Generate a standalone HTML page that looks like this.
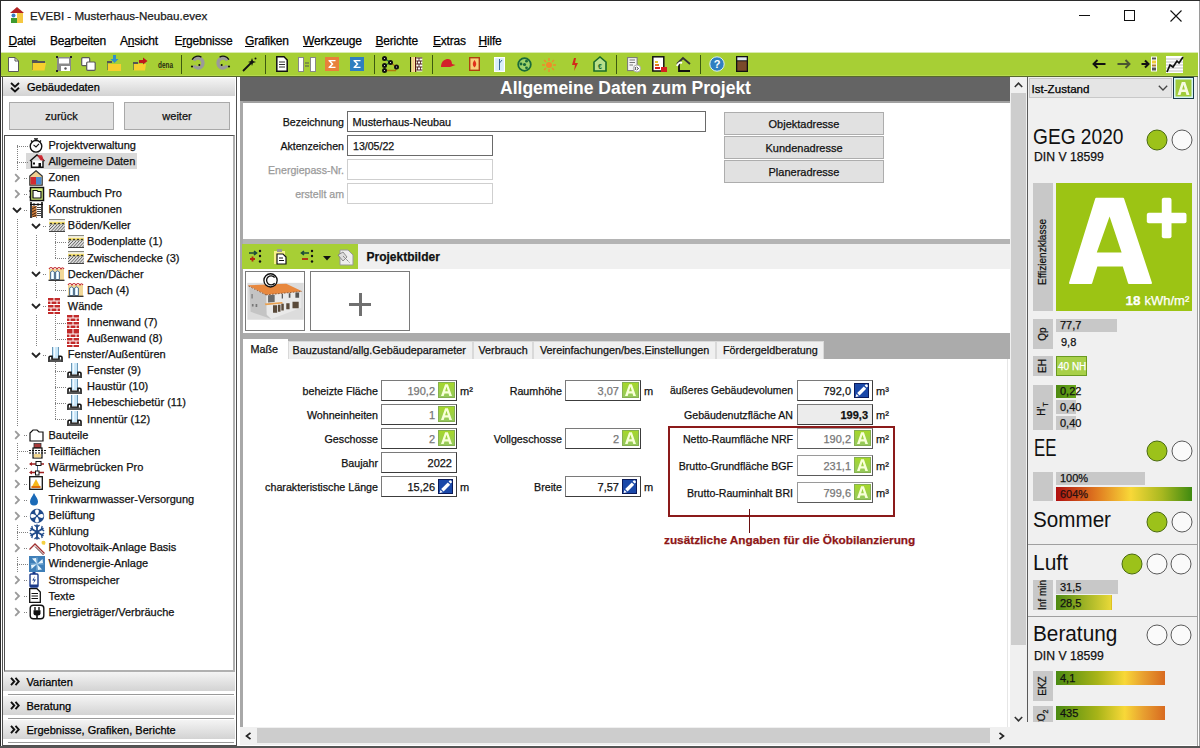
<!DOCTYPE html>
<html><head><meta charset="utf-8">
<style>
*{box-sizing:border-box;margin:0;padding:0}
html,body{width:1200px;height:748px;overflow:hidden;background:#fff;font-family:"Liberation Sans",sans-serif;font-size:11px;color:#000}
.a{position:absolute}
.t{position:absolute;white-space:nowrap;line-height:1;-webkit-text-stroke:0.25px currentColor}
.u{text-decoration:underline;text-underline-offset:0.5px;text-decoration-thickness:1px}
</style></head><body>
<div class="a" style="left:0px;top:0px;width:1200px;height:1px;background:#2b2b2b"></div>
<div class="a" style="left:0px;top:0px;width:1px;height:748px;background:#2b2b2b"></div>
<div class="a" style="left:1199px;top:1px;width:1px;height:747px;background:#9a9a9a"></div>
<svg class="a" style="left:10px;top:7px" width="14" height="16" viewBox="0 0 14 16"><path d="M7 0 L14 6 L0 6 Z" fill="#b22222"/><rect x="1" y="6" width="12" height="10" fill="#fff"/><rect x="7" y="6" width="6" height="10" fill="#f5c842"/><circle cx="3.5" cy="8.5" r="2" fill="#3a7bbf"/><rect x="1" y="11" width="6" height="5" fill="#3f9a2f"/></svg>
<div class="t" style="left:30px;top:10.18px;font-size:11.6px;color:#1a1a1a;">EVEBI - Musterhaus-Neubau.evex</div>
<div class="a" style="left:1079px;top:15px;width:11px;height:1px;background:#111"></div>
<div class="a" style="left:1124px;top:10px;width:11px;height:11px;border:1px solid #111"></div>
<svg class="a" style="left:1170px;top:10px" width="12" height="12" viewBox="0 0 12 12"><path d="M0.5 0.5 L11.5 11.5 M11.5 0.5 L0.5 11.5" stroke="#111" stroke-width="1.1"/></svg>
<div class="t" style="left:8.5px;top:35.34px;font-size:12px;letter-spacing:-0.2px"><span class="u">D</span>atei</div>
<div class="t" style="left:50px;top:35.34px;font-size:12px;letter-spacing:-0.2px">Be<span class="u">a</span>rbeiten</div>
<div class="t" style="left:120px;top:35.34px;font-size:12px;letter-spacing:-0.2px">A<span class="u">n</span>sicht</div>
<div class="t" style="left:174.5px;top:35.34px;font-size:12px;letter-spacing:-0.2px">E<span class="u">r</span>gebnisse</div>
<div class="t" style="left:245px;top:35.34px;font-size:12px;letter-spacing:-0.2px"><span class="u">G</span>rafiken</div>
<div class="t" style="left:303px;top:35.34px;font-size:12px;letter-spacing:-0.2px"><span class="u">W</span>erkzeuge</div>
<div class="t" style="left:375.5px;top:35.34px;font-size:12px;letter-spacing:-0.2px"><span class="u">B</span>erichte</div>
<div class="t" style="left:433px;top:35.34px;font-size:12px;letter-spacing:-0.2px"><span class="u">E</span>xtras</div>
<div class="t" style="left:478.5px;top:35.34px;font-size:12px;letter-spacing:-0.2px"><span class="u">H</span>ilfe</div>
<div class="a" style="left:1px;top:52px;width:1197px;height:25px;background:#a7cf35"></div>
<div class="a" style="left:1px;top:52px;width:1197px;height:1px;background:#d9ebb0"></div>
<div class="a" style="left:1px;top:75px;width:1197px;height:1px;background:#b6d94e"></div>
<div class="a" style="left:1px;top:76px;width:1197px;height:1px;background:#56682c"></div>
<div class="a" style="left:181px;top:55px;width:1px;height:19px;background:#3d5a10"></div>
<div class="a" style="left:265px;top:55px;width:1px;height:19px;background:#3d5a10"></div>
<div class="a" style="left:374px;top:55px;width:1px;height:19px;background:#3d5a10"></div>
<div class="a" style="left:432px;top:55px;width:1px;height:19px;background:#3d5a10"></div>
<div class="a" style="left:616px;top:55px;width:1px;height:19px;background:#3d5a10"></div>
<div class="a" style="left:700px;top:55px;width:1px;height:19px;background:#3d5a10"></div>
<svg class="a" style="left:8px;top:57px" width="11" height="15" viewBox="0 0 11 15"><path d="M0.5 0.5 H7 L10.5 4 V14.5 H0.5 Z" fill="#fff" stroke="#5a5a5a"/><path d="M7 0.5 V4 H10.5" fill="none" stroke="#5a5a5a"/></svg>
<svg class="a" style="left:32px;top:59px" width="14" height="12" viewBox="0 0 14 12"><path d="M0 1 H5 L6 2 H13 V4 H0 Z" fill="#555"/><path d="M1 4 H14 L12.5 11.5 H0 Z" fill="#f7cf2e"/><path d="M0 2 V11" stroke="#555"/></svg>
<svg class="a" style="left:56px;top:56px" width="16" height="16" viewBox="0 0 16 16"><rect x="1" y="1" width="14" height="14" fill="#8a8a8a"/><rect x="3" y="2.5" width="10" height="5" fill="#fff"/><rect x="5" y="10" width="9" height="5" fill="#fff"/><circle cx="9.5" cy="12.5" r="1.2" fill="#555"/><rect x="0" y="0" width="2" height="2" fill="#222"/><rect x="14" y="0" width="2" height="2" fill="#222"/><rect x="0" y="14" width="2" height="2" fill="#222"/></svg>
<svg class="a" style="left:81px;top:57px" width="15" height="14" viewBox="0 0 15 14"><rect x="0.7" y="0.7" width="8" height="8" rx="1" fill="#fff" stroke="#5a5a5a" stroke-width="1.2"/><rect x="5.7" y="5" width="8.5" height="8.3" rx="1" fill="#fff" stroke="#5a5a5a" stroke-width="1.2"/></svg>
<svg class="a" style="left:107px;top:55px" width="15" height="17" viewBox="0 0 15 17"><path d="M0 6 H5 V8 H0 Z" fill="#555"/><path d="M0 6 V15" stroke="#555" stroke-width="1.2"/><path d="M1 9 H14 V16 H1 Z" fill="#f7cf2e"/><path d="M6 0 H9 V4 H11.5 L7.5 8 L3.5 4 H6 Z" fill="#2f8fc9"/></svg>
<svg class="a" style="left:133px;top:56px" width="15" height="15" viewBox="0 0 15 15"><path d="M0 6 H5 V8 H0 Z" fill="#555"/><path d="M0 6 V14" stroke="#555" stroke-width="1.2"/><path d="M1 8 H13 L12 14.5 H1 Z" fill="#f7cf2e"/><path d="M6 4 H10 V1.5 L14.5 5 L10 8.5 V7 H6 Z" fill="#c0161b"/></svg>
<svg class="a" style="left:157px;top:60px" width="17" height="10" viewBox="0 0 17 10"><text x="1" y="8" font-size="9" font-weight="700" fill="#2a2a10" font-family="Liberation Sans" textLength="15" lengthAdjust="spacingAndGlyphs">dena</text><path d="M3 9.5 H9" stroke="#c8a020" stroke-width="0.8"/></svg>
<svg class="a" style="left:190px;top:55px" width="16" height="17" viewBox="0 0 16 17"><path d="M3.67 5.50 A5 5 0 1 1 3.67 10.50" stroke="#9a9a9a" stroke-width="3.4" fill="none"/><path d="M2.11 4.60 A6.8 6.8 0 0 1 11.40 2.11" stroke="#111" stroke-width="1.3" fill="none"/><circle cx="2" cy="11.5" r="1.1" fill="#111"/><circle cx="9.3" cy="10" r="1" fill="#111"/></svg>
<svg class="a" style="left:215px;top:55px" width="16" height="17" viewBox="0 0 16 17"><g transform="translate(16,0) scale(-1,1)"><path d="M3.67 5.50 A5 5 0 1 1 3.67 10.50" stroke="#9a9a9a" stroke-width="3.4" fill="none"/><path d="M2.11 4.60 A6.8 6.8 0 0 1 11.40 2.11" stroke="#111" stroke-width="1.3" fill="none"/><circle cx="2" cy="11.5" r="1.1" fill="#111"/><circle cx="9.3" cy="10" r="1" fill="#111"/></g></svg>
<svg class="a" style="left:242px;top:57px" width="15" height="15" viewBox="0 0 15 15"><path d="M1 14 L10 5" stroke="#111" stroke-width="1.8"/><path d="M10 1 L11 4 L14 5 L11 6 L10 9 L9 6 L6 5 L9 4 Z" fill="#111"/><circle cx="13.5" cy="1.5" r="1" fill="#111"/></svg>
<svg class="a" style="left:276px;top:56px" width="12" height="16" viewBox="0 0 12 16"><path d="M0.8 0.8 H8 L11.2 4 V15.2 H0.8 Z" fill="#fff" stroke="#111" stroke-width="1.5"/><path d="M3 6 H9 M3 8.5 H9 M3 11 H9" stroke="#333" stroke-width="1.2"/></svg>
<svg class="a" style="left:298px;top:57px" width="18" height="15" viewBox="0 0 18 15"><rect x="0.5" y="0.5" width="5" height="14" fill="#fff" stroke="#888"/><rect x="12.5" y="0.5" width="5" height="14" fill="#fff" stroke="#888"/><path d="M7 6 H11 M7 9 H11" stroke="#555"/></svg>
<svg class="a" style="left:325px;top:57px" width="14" height="14" viewBox="0 0 14 14"><rect width="14" height="14" fill="#e8803a"/><path d="M3.5 3 H10.5 V4.2 H6 L8.5 7 L6 9.8 H10.5 V11 H3.5 V10 L6.5 7 L3.5 4 Z" fill="#fff"/></svg>
<svg class="a" style="left:350px;top:57px" width="14" height="14" viewBox="0 0 14 14"><rect width="14" height="14" fill="#2f7fc0"/><path d="M3.5 3 H10.5 V4.2 H6 L8.5 7 L6 9.8 H10.5 V11 H3.5 V10 L6.5 7 L3.5 4 Z" fill="#fff"/></svg>
<svg class="a" style="left:381px;top:55px" width="18" height="18" viewBox="0 0 18 18"><path d="M3.5 3.5 L9.5 7.5 L3.5 10.5" stroke="#1a7a3a" stroke-width="1.3" fill="none"/><path d="M9.5 7.5 L15.5 12 L14.5 15.5 H3.5" stroke="#b07a10" stroke-width="1.3" fill="none"/><circle cx="3.5" cy="3.5" r="2.5" fill="#111"/><circle cx="9.5" cy="7.5" r="2.5" fill="#111"/><circle cx="3.5" cy="10.5" r="2.5" fill="#111"/><circle cx="15.5" cy="12" r="2.5" fill="#111"/><circle cx="3.5" cy="15.5" r="2.5" fill="#111"/><path d="M3.5 3 V4 M9.5 7 V8 M3.5 10 V11 M15.5 11.5 V12.5 M3.5 15 V16" stroke="#fff" stroke-width="0.8"/></svg>
<svg class="a" style="left:409px;top:57px" width="14" height="15" viewBox="0 0 14 15"><rect x="1" y="0" width="1.3" height="15" fill="#1a1a00"/><rect x="2.3" y="0" width="3.7" height="15" fill="#f8e89a"/><rect x="3.5" y="0" width="1.5" height="15" fill="#f4c890"/><rect x="6" y="0" width="1.3" height="15" fill="#5a1010"/><rect x="7.3" y="0.5" width="6" height="14" fill="#fff"/><path d="M7.3 1 H13.3 M7.3 4 H13.3 M7.3 7 H13.3 M7.3 10 H13.3 M7.3 13 H13.3" stroke="#4a1a1a" stroke-width="1.1"/><path d="M10 1 V4 M8.5 4 V7 M11.5 4 V7 M10 7 V10 M8.5 10 V13 M11.5 10 V13" stroke="#4a1a1a" stroke-width="0.8"/></svg>
<svg class="a" style="left:440px;top:59px" width="16" height="10" viewBox="0 0 16 10"><path d="M1 8 C1 2 5 0 8 0 C11 0 12 3 12 5 L15.5 6 L10 8 Z" fill="#d4202a"/></svg>
<svg class="a" style="left:469px;top:57px" width="11" height="14" viewBox="0 0 11 14"><rect x="0.7" y="0.7" width="9.6" height="12.6" fill="#f7cf7a" stroke="#b04010" stroke-width="1.4"/><path d="M5.5 3 C7.5 5.5 8 8 5.5 10.5 C3 8 3.5 5.5 5.5 3 Z" fill="#e0301a"/></svg>
<svg class="a" style="left:494px;top:57px" width="11" height="15" viewBox="0 0 11 15"><rect x="0.6" y="0.6" width="9.8" height="13.8" fill="#d8eefa" stroke="#fff" stroke-width="1.2"/><path d="M5.5 2 V13 M5.5 6 L8 3" stroke="#2a5a8a" stroke-width="0.9"/></svg>
<svg class="a" style="left:517px;top:57px" width="15" height="15" viewBox="0 0 15 15"><circle cx="7.5" cy="7.5" r="6.3" fill="#9fd36a" stroke="#1a6a3a" stroke-width="1.8"/><circle cx="7.5" cy="7.5" r="1.6" fill="#1a6a3a"/><circle cx="4" cy="7" r="1.4" fill="#1a6a3a"/><circle cx="9.5" cy="4.2" r="1.4" fill="#1a6a3a"/><circle cx="9.5" cy="10.8" r="1.4" fill="#1a6a3a"/></svg>
<svg class="a" style="left:542px;top:58px" width="14" height="14" viewBox="0 0 14 14"><circle cx="7" cy="7" r="3" fill="#f08a2a"/><path d="M7 0 V3 M7 11 V14 M0 7 H3 M11 7 H14 M2 2 L4 4 M10 10 L12 12 M12 2 L10 4 M2 12 L4 10" stroke="#f08a2a" stroke-width="1.3"/></svg>
<svg class="a" style="left:571px;top:58px" width="8" height="13" viewBox="0 0 8 13"><path d="M3 0 L5 0 L4 5 L7 5 L3 13 L4 7 L1 7 Z" fill="#d22a1a"/></svg>
<svg class="a" style="left:593px;top:56px" width="14" height="16" viewBox="0 0 14 16"><path d="M1 15 V6 L7 1 L13 6 V15 Z" fill="#b9e08a" stroke="#1a6a2a" stroke-width="1.6"/><text x="7" y="12.5" font-size="7" font-weight="700" text-anchor="middle" fill="#1a6a2a" font-family="Liberation Sans">€</text></svg>
<svg class="a" style="left:627px;top:57px" width="14" height="16" viewBox="0 0 14 16"><rect x="0.6" y="0.6" width="9.5" height="13" fill="#f4f4f4" stroke="#777" stroke-width="1"/><path d="M2.5 3 H8 M2.5 5.5 H8 M2.5 8 H6" stroke="#777"/><circle cx="10" cy="11.5" r="3.6" fill="#fff" stroke="#aaa"/><path d="M8.3 10 V13 M9.6 10 L11.5 11.5 L9.6 13" stroke="#333" stroke-width="0.9" fill="none"/></svg>
<svg class="a" style="left:652px;top:56px" width="15" height="16" viewBox="0 0 15 16"><rect x="0.8" y="0.8" width="11" height="14.2" fill="#fff" stroke="#111" stroke-width="1.5"/><rect x="3" y="5" width="3" height="2" fill="#e6c42a"/><rect x="3" y="8" width="4" height="2" fill="#e07a20"/><rect x="3" y="11" width="5" height="2" fill="#d42020"/><rect x="9" y="11" width="6" height="5" fill="#d42020"/></svg>
<svg class="a" style="left:675px;top:56px" width="17" height="16" viewBox="0 0 17 16"><path d="M2 8 L8 2 L15 8" stroke="#333" stroke-width="1.8" fill="none"/><path d="M4 6 V15 H15" stroke="#111" stroke-width="1.8" fill="none"/><path d="M2 10 C3 7 5 6 7 7" stroke="#fff" stroke-width="2" fill="none"/></svg>
<svg class="a" style="left:709px;top:56px" width="16" height="16" viewBox="0 0 16 16"><circle cx="8" cy="8" r="7.2" fill="#2f7fc0" stroke="#d8eef8" stroke-width="1"/><text x="8" y="12.2" font-size="11" font-weight="700" text-anchor="middle" fill="#fff" font-family="Liberation Sans">?</text></svg>
<svg class="a" style="left:736px;top:56px" width="12" height="16" viewBox="0 0 12 16"><rect x="0" y="0" width="12" height="16" fill="#111"/><rect x="1.3" y="1.3" width="9.4" height="3" fill="#dfe8f0"/><rect x="1.3" y="5.3" width="9.4" height="9.4" fill="#7a4a2a"/></svg>
<svg class="a" style="left:1092px;top:59px" width="14" height="10" viewBox="0 0 14 10"><path d="M13.5 5 H2 M5.5 1 L1.5 5 L5.5 9" stroke="#111" stroke-width="1.9" fill="none"/></svg>
<svg class="a" style="left:1117px;top:59px" width="14" height="10" viewBox="0 0 14 10"><path d="M0.5 5 H12 M8.5 1 L12.5 5 L8.5 9" stroke="#4a5630" stroke-width="1.9" fill="none"/></svg>
<svg class="a" style="left:1141px;top:56px" width="17" height="16" viewBox="0 0 17 16"><path d="M0.5 8 H6 M4 4.5 L7.5 8 L4 11.5" stroke="#111" stroke-width="2" fill="none"/><rect x="10" y="0.5" width="6" height="15" fill="#fff"/><rect x="11" y="1.5" width="4" height="2" fill="#555"/><rect x="11" y="4.5" width="4" height="3" fill="#f2cc3a"/><rect x="11" y="8.5" width="4" height="2" fill="#b08030"/><rect x="11" y="11.5" width="4" height="3" fill="#555"/></svg>
<svg class="a" style="left:1166px;top:56px" width="18" height="17" viewBox="0 0 18 17"><rect x="0" y="0" width="17" height="17" fill="#fff"/><path d="M0 3 H17 M0 6 H17 M0 9 H17 M0 12 H17 M0 15 H17" stroke="#c0c0c0" stroke-width="1"/><path d="M1 16 L4 9 L7 11 L11 5 L13 7 L17 1" stroke="#111" stroke-width="1.7" fill="none"/></svg>
<div class="a" style="left:2px;top:77px;width:235px;height:669px;background:#fff;border:1px solid #505050;border-top:none"></div>
<div class="a" style="left:3px;top:78px;width:232px;height:18px;background:linear-gradient(#f4f4f4,#d3d3d3)"></div>
<svg class="a" style="left:10px;top:82px" width="10" height="11" viewBox="0 0 10 11"><path d="M1 1 L5 4.6 L9 1 M1 5.8 L5 9.4 L9 5.8" stroke="#111" stroke-width="1.9" fill="none"/></svg>
<div class="t" style="left:27px;top:81.69px;font-size:11px;">Gebäudedaten</div>
<div class="a" style="left:9px;top:102px;width:105px;height:28px;background:#e1e1e1;border:1px solid #a9a9a9"></div>
<div class="a" style="left:124px;top:102px;width:106px;height:28px;background:#e1e1e1;border:1px solid #a9a9a9"></div>
<div class="t" style="left:-438.5px;width:1000px;text-align:center;top:110.69px;font-size:11px;color:#111;">zurück</div>
<div class="t" style="left:-323px;width:1000px;text-align:center;top:110.69px;font-size:11px;color:#111;">weiter</div>
<div class="a" style="left:4px;top:135px;width:231px;height:537px;background:#fff;border:2px solid #b0b0b0;border-top:1px solid #505050;border-left:1px solid #505050"></div>
<div class="a" style="left:26px;top:153px;width:111px;height:16px;background:#d9d9d9"></div>
<div class="a" style="left:17px;top:145px;width:1px;height:467px;background:repeating-linear-gradient(#808080 0 1px,transparent 1px 2px)"></div>
<div class="a" style="left:36px;top:215px;width:1px;height:140px;background:repeating-linear-gradient(#808080 0 1px,transparent 1px 2px)"></div>
<div class="a" style="left:55px;top:231px;width:1px;height:27px;background:repeating-linear-gradient(#808080 0 1px,transparent 1px 2px)"></div>
<div class="a" style="left:55px;top:279px;width:1px;height:11px;background:repeating-linear-gradient(#808080 0 1px,transparent 1px 2px)"></div>
<div class="a" style="left:55px;top:311px;width:1px;height:28px;background:repeating-linear-gradient(#808080 0 1px,transparent 1px 2px)"></div>
<div class="a" style="left:55px;top:360px;width:1px;height:59px;background:repeating-linear-gradient(#808080 0 1px,transparent 1px 2px)"></div>
<div class="a" style="left:17px;top:146px;width:11px;height:1px;background:repeating-linear-gradient(90deg,#808080 0 1px,transparent 1px 2px)"></div>
<svg class="a" style="left:29px;top:138px" width="14" height="15" viewBox="0 0 14 15"><circle cx="7" cy="8.3" r="5.8" fill="#fff" stroke="#111" stroke-width="1.4"/><path d="M5 0.8 H9 M7 0.8 V2.5" stroke="#111" stroke-width="1.3"/><path d="M4.5 6.8 L7 9 L10 5.8" stroke="#111" stroke-width="1.1" fill="none"/><path d="M2 2.5 L3.5 4 M12 2.5 L10.5 4" stroke="#111" stroke-width="1.2"/></svg>
<div class="t" style="left:48.5px;top:139.89px;font-size:11px;color:#111;">Projektverwaltung</div>
<div class="a" style="left:17px;top:162px;width:11px;height:1px;background:repeating-linear-gradient(90deg,#808080 0 1px,transparent 1px 2px)"></div>
<svg class="a" style="left:29px;top:154px" width="17" height="14" viewBox="0 0 17 14"><path d="M1 7 L8 1 L15.5 7" fill="none" stroke="#111" stroke-width="1.4"/><path d="M8 1 L15.5 7 L12 7 Z M8.5 1.2 L15 6.5 L13 1.2 Z" fill="#d02a33"/><path d="M2.5 6.5 V13.3 H14 V6.5" fill="#fff" stroke="#111" stroke-width="1.4"/><rect x="4" y="8.5" width="2" height="2" fill="#111"/><rect x="9.5" y="9" width="2.5" height="4.3" fill="#111"/></svg>
<div class="t" style="left:48.5px;top:155.99px;font-size:11px;color:#111;">Allgemeine Daten</div>
<div class="a" style="left:24px;top:178px;width:4px;height:1px;background:repeating-linear-gradient(90deg,#808080 0 1px,transparent 1px 2px)"></div>
<svg class="a" style="left:12px;top:170px" width="11" height="16" viewBox="0 0 11 16"><rect width="11" height="16" fill="#fff"/><path d="M3.2 4.2 L7 8 L3.2 11.8" stroke="#9a9a9a" stroke-width="1.8" fill="none"/></svg>
<svg class="a" style="left:29px;top:170px" width="14" height="16" viewBox="0 0 14 16"><path d="M7 0.8 L13.2 6 V15.2 H0.8 V6 Z" fill="#f0d090" stroke="#333" stroke-width="1.2"/><rect x="1.5" y="7" width="5.5" height="7.5" fill="#d02a33"/><rect x="7" y="7" width="5.5" height="7.5" fill="#4a8ad0"/></svg>
<div class="t" style="left:48.5px;top:172.09px;font-size:11px;color:#111;">Zonen</div>
<div class="a" style="left:24px;top:194px;width:4px;height:1px;background:repeating-linear-gradient(90deg,#808080 0 1px,transparent 1px 2px)"></div>
<svg class="a" style="left:12px;top:186px" width="11" height="16" viewBox="0 0 11 16"><rect width="11" height="16" fill="#fff"/><path d="M3.2 4.2 L7 8 L3.2 11.8" stroke="#9a9a9a" stroke-width="1.8" fill="none"/></svg>
<svg class="a" style="left:29px;top:186px" width="16" height="16" viewBox="0 0 16 16"><rect x="1.5" y="1.5" width="13" height="13" fill="#d6ee7a" stroke="#111" stroke-width="1.5"/><path d="M4 4.5 H8 L9 5.5 H12 V12 H4 Z" fill="#fff" stroke="#111" stroke-width="1.2"/><path d="M0 5 H2 M0 11 H2" stroke="#111"/></svg>
<div class="t" style="left:48.5px;top:188.19px;font-size:11px;color:#111;">Raumbuch Pro</div>
<div class="a" style="left:24px;top:210px;width:4px;height:1px;background:repeating-linear-gradient(90deg,#808080 0 1px,transparent 1px 2px)"></div>
<svg class="a" style="left:11px;top:202px" width="12" height="16" viewBox="0 0 12 16"><rect width="12" height="16" fill="#fff"/><path d="M2 6 L6 10 L10 6" stroke="#222" stroke-width="1.8" fill="none"/></svg>
<svg class="a" style="left:30px;top:202px" width="13" height="16" viewBox="0 0 13 16"><path d="M1 0 V16 M12 0 V16" stroke="#111" stroke-width="1.6"/><path d="M0 2.5 H13" stroke="#111" stroke-width="1.2"/><path d="M4 1 V4 M8 1 V4" stroke="#111" stroke-width="0.9"/><rect x="2" y="4" width="4.5" height="11" fill="#c87a3a"/><path d="M2 7 L6.5 4.5 M2 10 L6.5 7.5 M2 13 L6.5 10.5 M2.5 15 L6.5 13" stroke="#3a2010" stroke-width="0.9"/><rect x="7" y="4" width="4" height="11" fill="#fff"/><path d="M7 5.5 H11 M7 7.5 H11 M7 9.5 H11 M7 11.5 H11 M7 13.5 H11" stroke="#333" stroke-width="0.9"/></svg>
<div class="t" style="left:48.5px;top:204.29px;font-size:11px;color:#111;">Konstruktionen</div>
<div class="a" style="left:43px;top:226px;width:4px;height:1px;background:repeating-linear-gradient(90deg,#808080 0 1px,transparent 1px 2px)"></div>
<svg class="a" style="left:30px;top:218px" width="12" height="16" viewBox="0 0 12 16"><rect width="12" height="16" fill="#fff"/><path d="M2 6 L6 10 L10 6" stroke="#222" stroke-width="1.8" fill="none"/></svg>
<svg class="a" style="left:49px;top:219px" width="16" height="13" viewBox="0 0 16 13"><rect x="0" y="0" width="16" height="1.3" fill="#8a8a80"/><rect x="0" y="1.3" width="16" height="1.5" fill="#f4f0e0"/><rect x="0" y="2.8" width="16" height="2.6" fill="#f6e070"/><path d="M0 5.4 L2 3.6 L4 5.4 L6 3.6 L8 5.4 L10 3.6 L12 5.4 L14 3.6 L16 5.4 Z" fill="#222"/><rect x="0" y="5.6" width="16" height="6.4" fill="#dcdcdc"/><path d="M0 8 L2.4 5.6 M0 11 L5.4 5.6 M2.5 12 L8.4 5.6 M5.5 12 L11.4 5.6 M8.5 12 L14.4 5.6 M11.5 12 L16 7.2 M14.5 12 L16 10.3" stroke="#666" stroke-width="1"/><rect x="0" y="12" width="16" height="1" fill="#444"/></svg>
<div class="t" style="left:67.8px;top:220.39px;font-size:11px;color:#111;">Böden/Keller</div>
<div class="a" style="left:55px;top:242px;width:11px;height:1px;background:repeating-linear-gradient(90deg,#808080 0 1px,transparent 1px 2px)"></div>
<svg class="a" style="left:68px;top:235px" width="16" height="13" viewBox="0 0 16 13"><rect x="0" y="0" width="16" height="1.3" fill="#8a8a80"/><rect x="0" y="1.3" width="16" height="1.5" fill="#f4f0e0"/><rect x="0" y="2.8" width="16" height="2.6" fill="#f6e070"/><path d="M0 5.4 L2 3.6 L4 5.4 L6 3.6 L8 5.4 L10 3.6 L12 5.4 L14 3.6 L16 5.4 Z" fill="#222"/><rect x="0" y="5.6" width="16" height="6.4" fill="#dcdcdc"/><path d="M0 8 L2.4 5.6 M0 11 L5.4 5.6 M2.5 12 L8.4 5.6 M5.5 12 L11.4 5.6 M8.5 12 L14.4 5.6 M11.5 12 L16 7.2 M14.5 12 L16 10.3" stroke="#666" stroke-width="1"/><rect x="0" y="12" width="16" height="1" fill="#444"/></svg>
<div class="t" style="left:87.1px;top:236.49px;font-size:11px;color:#111;">Bodenplatte (1)</div>
<div class="a" style="left:55px;top:258px;width:11px;height:1px;background:repeating-linear-gradient(90deg,#808080 0 1px,transparent 1px 2px)"></div>
<svg class="a" style="left:68px;top:251px" width="16" height="13" viewBox="0 0 16 13"><rect x="0" y="0" width="16" height="1.3" fill="#8a8a80"/><rect x="0" y="1.3" width="16" height="1.5" fill="#f4f0e0"/><rect x="0" y="2.8" width="16" height="2.6" fill="#f6e070"/><path d="M0 5.4 L2 3.6 L4 5.4 L6 3.6 L8 5.4 L10 3.6 L12 5.4 L14 3.6 L16 5.4 Z" fill="#222"/><rect x="0" y="5.6" width="16" height="6.4" fill="#dcdcdc"/><path d="M0 8 L2.4 5.6 M0 11 L5.4 5.6 M2.5 12 L8.4 5.6 M5.5 12 L11.4 5.6 M8.5 12 L14.4 5.6 M11.5 12 L16 7.2 M14.5 12 L16 10.3" stroke="#666" stroke-width="1"/><rect x="0" y="12" width="16" height="1" fill="#444"/></svg>
<div class="t" style="left:87.1px;top:252.59px;font-size:11px;color:#111;">Zwischendecke (3)</div>
<div class="a" style="left:43px;top:274px;width:4px;height:1px;background:repeating-linear-gradient(90deg,#808080 0 1px,transparent 1px 2px)"></div>
<svg class="a" style="left:30px;top:266px" width="12" height="16" viewBox="0 0 12 16"><rect width="12" height="16" fill="#fff"/><path d="M2 6 L6 10 L10 6" stroke="#222" stroke-width="1.8" fill="none"/></svg>
<svg class="a" style="left:48px;top:266px" width="17" height="15" viewBox="0 0 17 15"><rect x="1" y="3" width="15" height="11" fill="#f2d898"/><path d="M1 3 Q3 0 5 3 Q7 0 9 3 Q11 0 13 3 Q14.5 0.5 16 3" stroke="#c0262a" fill="none" stroke-width="1.2"/><path d="M2.5 13.5 V6 Q4.5 3.5 6.5 6 V13.5 Z M7.5 13.5 V6 Q9.5 3.5 11.5 6 V13.5 Z" fill="#d6ecf8" stroke="#4a6a8a" stroke-width="0.9"/><path d="M4.5 6 V13 M9.5 6 V13" stroke="#fff" stroke-width="1"/><path d="M0.5 14.3 H16.5" stroke="#222" stroke-width="1.2"/></svg>
<div class="t" style="left:67.8px;top:268.69px;font-size:11px;color:#111;">Decken/Dächer</div>
<div class="a" style="left:55px;top:290px;width:11px;height:1px;background:repeating-linear-gradient(90deg,#808080 0 1px,transparent 1px 2px)"></div>
<svg class="a" style="left:67px;top:282px" width="17" height="15" viewBox="0 0 17 15"><rect x="1" y="3" width="15" height="11" fill="#f2d898"/><path d="M1 3 Q3 0 5 3 Q7 0 9 3 Q11 0 13 3 Q14.5 0.5 16 3" stroke="#c0262a" fill="none" stroke-width="1.2"/><path d="M2.5 13.5 V6 Q4.5 3.5 6.5 6 V13.5 Z M7.5 13.5 V6 Q9.5 3.5 11.5 6 V13.5 Z" fill="#d6ecf8" stroke="#4a6a8a" stroke-width="0.9"/><path d="M4.5 6 V13 M9.5 6 V13" stroke="#fff" stroke-width="1"/><path d="M0.5 14.3 H16.5" stroke="#222" stroke-width="1.2"/></svg>
<div class="t" style="left:87.1px;top:284.79px;font-size:11px;color:#111;">Dach (4)</div>
<div class="a" style="left:43px;top:306px;width:4px;height:1px;background:repeating-linear-gradient(90deg,#808080 0 1px,transparent 1px 2px)"></div>
<svg class="a" style="left:30px;top:298px" width="12" height="16" viewBox="0 0 12 16"><rect width="12" height="16" fill="#fff"/><path d="M2 6 L6 10 L10 6" stroke="#222" stroke-width="1.8" fill="none"/></svg>
<svg class="a" style="left:48px;top:298px" width="12" height="16" viewBox="0 0 12 16"><rect x="0" y="0" width="12" height="16" fill="#c22a2a"/><path d="M0 3 H12 M0 6.5 H12 M0 10 H12 M0 13.5 H12 M6 0 V3 M3 3 V6.5 M9 3 V6.5 M6 6.5 V10 M3 10 V13.5 M9 10 V13.5 M6 13.5 V16" stroke="#fff" stroke-width="1"/></svg>
<div class="t" style="left:67.8px;top:300.89px;font-size:11px;color:#111;">Wände</div>
<div class="a" style="left:55px;top:323px;width:11px;height:1px;background:repeating-linear-gradient(90deg,#808080 0 1px,transparent 1px 2px)"></div>
<svg class="a" style="left:67px;top:315px" width="12" height="16" viewBox="0 0 12 16"><rect x="0" y="0" width="12" height="16" fill="#c22a2a"/><path d="M0 3 H12 M0 6.5 H12 M0 10 H12 M0 13.5 H12 M6 0 V3 M3 3 V6.5 M9 3 V6.5 M6 6.5 V10 M3 10 V13.5 M9 10 V13.5 M6 13.5 V16" stroke="#fff" stroke-width="1"/></svg>
<div class="t" style="left:87.1px;top:316.99px;font-size:11px;color:#111;">Innenwand (7)</div>
<div class="a" style="left:55px;top:339px;width:11px;height:1px;background:repeating-linear-gradient(90deg,#808080 0 1px,transparent 1px 2px)"></div>
<svg class="a" style="left:67px;top:331px" width="12" height="16" viewBox="0 0 12 16"><rect x="0" y="0" width="12" height="16" fill="#c22a2a"/><path d="M0 3 H12 M0 6.5 H12 M0 10 H12 M0 13.5 H12 M6 0 V3 M3 3 V6.5 M9 3 V6.5 M6 6.5 V10 M3 10 V13.5 M9 10 V13.5 M6 13.5 V16" stroke="#fff" stroke-width="1"/></svg>
<div class="t" style="left:87.1px;top:333.09px;font-size:11px;color:#111;">Außenwand (8)</div>
<div class="a" style="left:43px;top:355px;width:4px;height:1px;background:repeating-linear-gradient(90deg,#808080 0 1px,transparent 1px 2px)"></div>
<svg class="a" style="left:30px;top:347px" width="12" height="16" viewBox="0 0 12 16"><rect width="12" height="16" fill="#fff"/><path d="M2 6 L6 10 L10 6" stroke="#222" stroke-width="1.8" fill="none"/></svg>
<svg class="a" style="left:48px;top:347px" width="15" height="16" viewBox="0 0 15 16"><rect x="4" y="0" width="7" height="11" fill="#c8e6f8"/><path d="M4.5 0 V11 M10.5 0 V11" stroke="#6a98b8" stroke-width="1"/><path d="M6.5 0 V10" stroke="#f4fbff" stroke-width="1.3"/><path d="M1 15 V10.5 Q1 9.3 2.2 9.3 H4 V12.3 H11 V9.3 H12.8 Q14 9.3 14 10.5 V15" stroke="#111" stroke-width="1.6" fill="none"/><rect x="2" y="12.5" width="11" height="2.5" fill="#555"/></svg>
<div class="t" style="left:67.8px;top:349.19px;font-size:11px;color:#111;">Fenster/Außentüren</div>
<div class="a" style="left:55px;top:371px;width:11px;height:1px;background:repeating-linear-gradient(90deg,#808080 0 1px,transparent 1px 2px)"></div>
<svg class="a" style="left:67px;top:363px" width="15" height="16" viewBox="0 0 15 16"><rect x="4" y="0" width="7" height="11" fill="#c8e6f8"/><path d="M4.5 0 V11 M10.5 0 V11" stroke="#6a98b8" stroke-width="1"/><path d="M6.5 0 V10" stroke="#f4fbff" stroke-width="1.3"/><path d="M1 15 V10.5 Q1 9.3 2.2 9.3 H4 V12.3 H11 V9.3 H12.8 Q14 9.3 14 10.5 V15" stroke="#111" stroke-width="1.6" fill="none"/><rect x="2" y="12.5" width="11" height="2.5" fill="#555"/></svg>
<div class="t" style="left:87.1px;top:365.29px;font-size:11px;color:#111;">Fenster (9)</div>
<div class="a" style="left:55px;top:387px;width:11px;height:1px;background:repeating-linear-gradient(90deg,#808080 0 1px,transparent 1px 2px)"></div>
<svg class="a" style="left:67px;top:379px" width="15" height="16" viewBox="0 0 15 16"><rect x="4" y="0" width="7" height="11" fill="#c8e6f8"/><path d="M4.5 0 V11 M10.5 0 V11" stroke="#6a98b8" stroke-width="1"/><path d="M6.5 0 V10" stroke="#f4fbff" stroke-width="1.3"/><path d="M1 15 V10.5 Q1 9.3 2.2 9.3 H4 V12.3 H11 V9.3 H12.8 Q14 9.3 14 10.5 V15" stroke="#111" stroke-width="1.6" fill="none"/><rect x="2" y="12.5" width="11" height="2.5" fill="#555"/></svg>
<div class="t" style="left:87.1px;top:381.39px;font-size:11px;color:#111;">Haustür (10)</div>
<div class="a" style="left:55px;top:403px;width:11px;height:1px;background:repeating-linear-gradient(90deg,#808080 0 1px,transparent 1px 2px)"></div>
<svg class="a" style="left:67px;top:395px" width="15" height="16" viewBox="0 0 15 16"><rect x="4" y="0" width="7" height="11" fill="#c8e6f8"/><path d="M4.5 0 V11 M10.5 0 V11" stroke="#6a98b8" stroke-width="1"/><path d="M6.5 0 V10" stroke="#f4fbff" stroke-width="1.3"/><path d="M1 15 V10.5 Q1 9.3 2.2 9.3 H4 V12.3 H11 V9.3 H12.8 Q14 9.3 14 10.5 V15" stroke="#111" stroke-width="1.6" fill="none"/><rect x="2" y="12.5" width="11" height="2.5" fill="#555"/></svg>
<div class="t" style="left:87.1px;top:397.49px;font-size:11px;color:#111;">Hebeschiebetür (11)</div>
<div class="a" style="left:55px;top:419px;width:11px;height:1px;background:repeating-linear-gradient(90deg,#808080 0 1px,transparent 1px 2px)"></div>
<svg class="a" style="left:67px;top:411px" width="15" height="16" viewBox="0 0 15 16"><rect x="4" y="0" width="7" height="11" fill="#c8e6f8"/><path d="M4.5 0 V11 M10.5 0 V11" stroke="#6a98b8" stroke-width="1"/><path d="M6.5 0 V10" stroke="#f4fbff" stroke-width="1.3"/><path d="M1 15 V10.5 Q1 9.3 2.2 9.3 H4 V12.3 H11 V9.3 H12.8 Q14 9.3 14 10.5 V15" stroke="#111" stroke-width="1.6" fill="none"/><rect x="2" y="12.5" width="11" height="2.5" fill="#555"/></svg>
<div class="t" style="left:87.1px;top:413.59px;font-size:11px;color:#111;">Innentür (12)</div>
<div class="a" style="left:24px;top:435px;width:4px;height:1px;background:repeating-linear-gradient(90deg,#808080 0 1px,transparent 1px 2px)"></div>
<svg class="a" style="left:12px;top:427px" width="11" height="16" viewBox="0 0 11 16"><rect width="11" height="16" fill="#fff"/><path d="M3.2 4.2 L7 8 L3.2 11.8" stroke="#9a9a9a" stroke-width="1.8" fill="none"/></svg>
<svg class="a" style="left:29px;top:427px" width="15" height="15" viewBox="0 0 15 15"><path d="M1 14 V6 L4 3 H8 L10 5 H14 V14 Z" fill="#fff" stroke="#111" stroke-width="1.2"/></svg>
<div class="t" style="left:48.5px;top:429.69px;font-size:11px;color:#111;">Bauteile</div>
<div class="a" style="left:17px;top:451px;width:11px;height:1px;background:repeating-linear-gradient(90deg,#808080 0 1px,transparent 1px 2px)"></div>
<svg class="a" style="left:29px;top:443px" width="17" height="16" viewBox="0 0 17 16"><rect x="5" y="0.5" width="7" height="4.5" fill="#a83a3a" stroke="#333" stroke-width="0.8"/><rect x="4" y="5" width="9" height="10" fill="#fff" stroke="#111" stroke-width="1.2"/><path d="M0 7.5 H17 M0 10 H17" stroke="#111" stroke-width="1" stroke-dasharray="2 1"/><rect x="5" y="11" width="7" height="3.5" fill="#f4d890"/></svg>
<div class="t" style="left:48.5px;top:445.79px;font-size:11px;color:#111;">Teilflächen</div>
<div class="a" style="left:24px;top:468px;width:4px;height:1px;background:repeating-linear-gradient(90deg,#808080 0 1px,transparent 1px 2px)"></div>
<svg class="a" style="left:12px;top:460px" width="11" height="16" viewBox="0 0 11 16"><rect width="11" height="16" fill="#fff"/><path d="M3.2 4.2 L7 8 L3.2 11.8" stroke="#9a9a9a" stroke-width="1.8" fill="none"/></svg>
<svg class="a" style="left:29px;top:460px" width="17" height="16" viewBox="0 0 17 16"><path d="M1 4 H15 M1 12.5 H15" stroke="#a02020" stroke-width="1.3"/><path d="M0 4 L3 2 V6 Z M0 12.5 L3 10.5 V14.5 Z" fill="#a02020"/><path d="M8.5 5 V12" stroke="#5a7aa0" stroke-width="1"/><rect x="7" y="1.5" width="5" height="4" fill="#fff" stroke="#111" stroke-width="1"/><rect x="6.5" y="11" width="3.5" height="4" fill="#fff" stroke="#111" stroke-width="1"/></svg>
<div class="t" style="left:48.5px;top:461.89px;font-size:11px;color:#111;">Wärmebrücken Pro</div>
<div class="a" style="left:24px;top:484px;width:4px;height:1px;background:repeating-linear-gradient(90deg,#808080 0 1px,transparent 1px 2px)"></div>
<svg class="a" style="left:12px;top:476px" width="11" height="16" viewBox="0 0 11 16"><rect width="11" height="16" fill="#fff"/><path d="M3.2 4.2 L7 8 L3.2 11.8" stroke="#9a9a9a" stroke-width="1.8" fill="none"/></svg>
<svg class="a" style="left:29px;top:476px" width="14" height="14" viewBox="0 0 14 14"><rect x="0.7" y="0.7" width="12.6" height="12.6" fill="#fff" stroke="#111" stroke-width="1.3"/><path d="M7 3 L11.5 11.5 H2.5 Z" fill="#f6b81a"/><rect x="2.5" y="10" width="9" height="2" fill="#e07010"/></svg>
<div class="t" style="left:48.5px;top:477.99px;font-size:11px;color:#111;">Beheizung</div>
<div class="a" style="left:24px;top:500px;width:4px;height:1px;background:repeating-linear-gradient(90deg,#808080 0 1px,transparent 1px 2px)"></div>
<svg class="a" style="left:12px;top:492px" width="11" height="16" viewBox="0 0 11 16"><rect width="11" height="16" fill="#fff"/><path d="M3.2 4.2 L7 8 L3.2 11.8" stroke="#9a9a9a" stroke-width="1.8" fill="none"/></svg>
<svg class="a" style="left:29px;top:492px" width="10" height="14" viewBox="0 0 10 14"><path d="M5 1 C7 5 9 7 9 9.5 A4 4 0 0 1 1 9.5 C1 7 3 5 5 1 Z" fill="#1a6ab8"/></svg>
<div class="t" style="left:48.5px;top:494.09px;font-size:11px;color:#111;">Trinkwarmwasser-Versorgung</div>
<div class="a" style="left:24px;top:516px;width:4px;height:1px;background:repeating-linear-gradient(90deg,#808080 0 1px,transparent 1px 2px)"></div>
<svg class="a" style="left:12px;top:508px" width="11" height="16" viewBox="0 0 11 16"><rect width="11" height="16" fill="#fff"/><path d="M3.2 4.2 L7 8 L3.2 11.8" stroke="#9a9a9a" stroke-width="1.8" fill="none"/></svg>
<svg class="a" style="left:29px;top:508px" width="16" height="16" viewBox="0 0 16 16"><circle cx="8" cy="8" r="7.2" fill="#1f4a8a"/><path d="M8 8 C5 3 6 1.5 8 1.5 C10 1.5 11 3 8 8 M8 8 C13 5 14.5 6 14.5 8 C14.5 10 13 11 8 8 M8 8 C11 13 10 14.5 8 14.5 C6 14.5 5 13 8 8 M8 8 C3 11 1.5 10 1.5 8 C1.5 6 3 5 8 8" fill="#fff"/><circle cx="8" cy="8" r="1.3" fill="#1f4a8a"/></svg>
<div class="t" style="left:48.5px;top:510.19px;font-size:11px;color:#111;">Belüftung</div>
<div class="a" style="left:17px;top:532px;width:11px;height:1px;background:repeating-linear-gradient(90deg,#808080 0 1px,transparent 1px 2px)"></div>
<svg class="a" style="left:29px;top:524px" width="16" height="16" viewBox="0 0 16 16"><path d="M8 0.5 V15.5 M1.5 4.2 L14.5 11.8 M1.5 11.8 L14.5 4.2" stroke="#1f4a8a" stroke-width="1.8"/><path d="M5.5 1 L8 3.2 L10.5 1 M5.5 15 L8 12.8 L10.5 15 M0.8 7 L3.6 5.2 L2.8 2 M15.2 9 L12.4 10.8 L13.2 14 M0.8 9 L3.6 10.8 L2.8 14 M15.2 7 L12.4 5.2 L13.2 2" stroke="#1f4a8a" stroke-width="1.3" fill="none"/><circle cx="8" cy="8" r="1.8" fill="#1f4a8a"/></svg>
<div class="t" style="left:48.5px;top:526.29px;font-size:11px;color:#111;">Kühlung</div>
<div class="a" style="left:24px;top:548px;width:4px;height:1px;background:repeating-linear-gradient(90deg,#808080 0 1px,transparent 1px 2px)"></div>
<svg class="a" style="left:12px;top:540px" width="11" height="16" viewBox="0 0 11 16"><rect width="11" height="16" fill="#fff"/><path d="M3.2 4.2 L7 8 L3.2 11.8" stroke="#9a9a9a" stroke-width="1.8" fill="none"/></svg>
<svg class="a" style="left:29px;top:540px" width="17" height="16" viewBox="0 0 17 16"><path d="M0.5 9.5 L6 4 L15.5 13.5" stroke="#a03030" stroke-width="1.3" fill="none"/><path d="M6 6.5 L14.5 15" stroke="#5a2020" stroke-width="1" fill="none"/><path d="M12.5 1.5 L16 1 L16 5 Z" fill="#f4d040"/><circle cx="14.5" cy="2.8" r="2" fill="#f4d040"/></svg>
<div class="t" style="left:48.5px;top:542.39px;font-size:11px;color:#111;">Photovoltaik-Anlage Basis</div>
<div class="a" style="left:17px;top:564px;width:11px;height:1px;background:repeating-linear-gradient(90deg,#808080 0 1px,transparent 1px 2px)"></div>
<svg class="a" style="left:29px;top:556px" width="16" height="16" viewBox="0 0 16 16"><rect width="16" height="16" fill="#3f7fb8"/><path d="M8 8 L3 2.5 L7 2 Z M8 8 L13.5 3 L14 7 Z M8 8 L13 13.5 L9 14 Z M8 8 L2.5 13 L2 9 Z" fill="#e6f4fc"/><path d="M8 8 L8 1.5 M8 8 L14.5 8 M8 8 L8 14.5 M8 8 L1.5 8" stroke="#9cc8e8" stroke-width="0.8"/></svg>
<div class="t" style="left:48.5px;top:558.49px;font-size:11px;color:#111;">Windenergie-Anlage</div>
<div class="a" style="left:24px;top:580px;width:4px;height:1px;background:repeating-linear-gradient(90deg,#808080 0 1px,transparent 1px 2px)"></div>
<svg class="a" style="left:12px;top:572px" width="11" height="16" viewBox="0 0 11 16"><rect width="11" height="16" fill="#fff"/><path d="M3.2 4.2 L7 8 L3.2 11.8" stroke="#9a9a9a" stroke-width="1.8" fill="none"/></svg>
<svg class="a" style="left:29px;top:572px" width="10" height="16" viewBox="0 0 10 16"><rect x="3.5" y="0" width="3" height="2" fill="#1a3a8a"/><rect x="1" y="2" width="8" height="13" rx="1" fill="#fff" stroke="#1a3a8a" stroke-width="1.4"/><rect x="1" y="12.5" width="8" height="2.5" fill="#1a3a8a"/><path d="M6 4 L3.2 8.5 H5.3 L4 12 L7 7.5 H4.8 Z" fill="#1a3a8a"/></svg>
<div class="t" style="left:48.5px;top:574.59px;font-size:11px;color:#111;">Stromspeicher</div>
<div class="a" style="left:24px;top:596px;width:4px;height:1px;background:repeating-linear-gradient(90deg,#808080 0 1px,transparent 1px 2px)"></div>
<svg class="a" style="left:12px;top:588px" width="11" height="16" viewBox="0 0 11 16"><rect width="11" height="16" fill="#fff"/><path d="M3.2 4.2 L7 8 L3.2 11.8" stroke="#9a9a9a" stroke-width="1.8" fill="none"/></svg>
<svg class="a" style="left:29px;top:588px" width="12" height="15" viewBox="0 0 12 15"><path d="M0.7 0.7 H8 L11.3 4 V14.3 H0.7 Z" fill="#fff" stroke="#111" stroke-width="1.3"/><path d="M2.5 5.5 H9 M2.5 8 H9 M2.5 10.5 H9" stroke="#111" stroke-width="1.1"/></svg>
<div class="t" style="left:48.5px;top:590.69px;font-size:11px;color:#111;">Texte</div>
<div class="a" style="left:24px;top:612px;width:4px;height:1px;background:repeating-linear-gradient(90deg,#808080 0 1px,transparent 1px 2px)"></div>
<svg class="a" style="left:12px;top:604px" width="11" height="16" viewBox="0 0 11 16"><rect width="11" height="16" fill="#fff"/><path d="M3.2 4.2 L7 8 L3.2 11.8" stroke="#9a9a9a" stroke-width="1.8" fill="none"/></svg>
<svg class="a" style="left:29px;top:604px" width="16" height="16" viewBox="0 0 16 16"><rect x="1.2" y="1.2" width="13.6" height="13.6" rx="3" fill="#fff" stroke="#111" stroke-width="1.4"/><path d="M6 3 V6.5 M10 3 V6.5" stroke="#111" stroke-width="1.4"/><path d="M4.5 6.3 H11.5 V9.5 Q11.5 11.5 9 11.5 H7 Q4.5 11.5 4.5 9.5 Z" fill="#111"/><rect x="7.2" y="11" width="1.6" height="4" fill="#111"/></svg>
<div class="t" style="left:48.5px;top:606.79px;font-size:11px;color:#111;">Energieträger/Verbräuche</div>
<div class="a" style="left:3px;top:672px;width:232px;height:19px;background:linear-gradient(#f4f4f4,#d3d3d3)"></div>
<svg class="a" style="left:10px;top:677px" width="10" height="9" viewBox="0 0 10 9"><path d="M1 0.8 L4.3 4.5 L1 8.2 M5.5 0.8 L8.8 4.5 L5.5 8.2" stroke="#111" stroke-width="1.9" fill="none"/></svg>
<div class="t" style="left:26.5px;top:676.69px;font-size:11px;">Varianten</div>
<div class="a" style="left:8px;top:694px;width:226px;height:1px;background:#9a9a9a"></div>
<div class="a" style="left:3px;top:696px;width:232px;height:19px;background:linear-gradient(#f4f4f4,#d3d3d3)"></div>
<svg class="a" style="left:10px;top:701px" width="10" height="9" viewBox="0 0 10 9"><path d="M1 0.8 L4.3 4.5 L1 8.2 M5.5 0.8 L8.8 4.5 L5.5 8.2" stroke="#111" stroke-width="1.9" fill="none"/></svg>
<div class="t" style="left:26.5px;top:700.69px;font-size:11px;">Beratung</div>
<div class="a" style="left:8px;top:718px;width:226px;height:1px;background:#9a9a9a"></div>
<div class="a" style="left:3px;top:720px;width:232px;height:19px;background:linear-gradient(#f4f4f4,#d3d3d3)"></div>
<svg class="a" style="left:10px;top:725px" width="10" height="9" viewBox="0 0 10 9"><path d="M1 0.8 L4.3 4.5 L1 8.2 M5.5 0.8 L8.8 4.5 L5.5 8.2" stroke="#111" stroke-width="1.9" fill="none"/></svg>
<div class="t" style="left:26.5px;top:724.69px;font-size:11px;">Ergebnisse, Grafiken, Berichte</div>
<div class="a" style="left:8px;top:742px;width:226px;height:1px;background:#9a9a9a"></div>
<div class="a" style="left:2px;top:745px;width:235px;height:1px;background:#505050"></div>
<div class="a" style="left:240px;top:77px;width:770px;height:24px;background:#646464"></div>
<div class="a" style="left:240px;top:101px;width:770px;height:2px;background:#a0a0a0"></div>
<div class="t" style="left:125.5px;width:1000px;text-align:center;top:80.19px;font-size:17.5px;font-weight:700;color:#fff;-webkit-text-stroke:0;">Allgemeine Daten zum Projekt</div>
<div class="a" style="left:240px;top:101px;width:3px;height:626px;background:#a8a8a8"></div>
<div class="t" style="right:856px;text-align:right;top:117.03px;font-size:10.6px;color:#111;">Bezeichnung</div>
<div class="t" style="right:856px;text-align:right;top:141.03px;font-size:10.6px;color:#111;">Aktenzeichen</div>
<div class="t" style="right:856px;text-align:right;top:165.03px;font-size:10.6px;color:#9a9a9a;">Energiepass-Nr.</div>
<div class="t" style="right:856px;text-align:right;top:189.03px;font-size:10.6px;color:#9a9a9a;">erstellt am</div>
<div class="a" style="left:347px;top:111px;width:359px;height:21px;border:1px solid #6a6a6a;background:#fff"></div>
<div class="t" style="left:352.5px;top:116.77px;font-size:10.9px;color:#111;">Musterhaus-Neubau</div>
<div class="a" style="left:347px;top:135px;width:146px;height:21px;border:1px solid #6a6a6a;background:#fff"></div>
<div class="t" style="left:353px;top:141.03px;font-size:10.6px;color:#111;">13/05/22</div>
<div class="a" style="left:347px;top:159px;width:146px;height:21px;border:1px solid #cfcfcf;background:#fff"></div>
<div class="a" style="left:347px;top:183px;width:146px;height:21px;border:1px solid #cfcfcf;background:#fff"></div>
<div class="a" style="left:724px;top:112px;width:160px;height:23px;background:#e1e1e1;border:1px solid #adadad"></div>
<div class="t" style="left:304px;width:1000px;text-align:center;top:118.69px;font-size:11px;color:#111;">Objektadresse</div>
<div class="a" style="left:724px;top:136px;width:160px;height:23px;background:#e1e1e1;border:1px solid #adadad"></div>
<div class="t" style="left:304px;width:1000px;text-align:center;top:142.69px;font-size:11px;color:#111;">Kundenadresse</div>
<div class="a" style="left:724px;top:160px;width:160px;height:23px;background:#e1e1e1;border:1px solid #adadad"></div>
<div class="t" style="left:304px;width:1000px;text-align:center;top:166.69px;font-size:11px;color:#111;">Planeradresse</div>
<div class="a" style="left:243px;top:239px;width:767px;height:5px;background:#b4b4b4"></div>
<div class="a" style="left:243px;top:244px;width:767px;height:25px;background:#f0f0f0"></div>
<div class="a" style="left:242px;top:244px;width:116px;height:25px;background:#a7cf35"></div>
<div class="t" style="left:366.5px;top:250.84px;font-size:12px;font-weight:700;color:#111;">Projektbilder</div>
<svg class="a" style="left:248px;top:249px" width="15" height="15" viewBox="0 0 15 15"><path d="M1 4 H8 M6 2 L8.5 4 L6 6" stroke="#1a4a3a" stroke-width="1.6" fill="none"/><path d="M2 10 H7 M4.5 7.5 V12.5" stroke="#b02a10" stroke-width="1.8"/><circle cx="12" cy="2" r="1.2" fill="#111"/><circle cx="12" cy="7" r="1.2" fill="#111"/><circle cx="12" cy="12.5" r="1.2" fill="#111"/></svg>
<svg class="a" style="left:273px;top:248px" width="16" height="17" viewBox="0 0 16 17"><rect x="1" y="3" width="11" height="13" fill="#f6f08a"/><rect x="4" y="1" width="5" height="3" fill="#999"/><path d="M4 6 H10 L13 9 V16 H4 Z" fill="#fff" stroke="#111" stroke-width="1.2"/><path d="M6 10 H10 M6 12.5 H11" stroke="#111"/></svg>
<svg class="a" style="left:300px;top:249px" width="15" height="15" viewBox="0 0 15 15"><path d="M9 4 H2 M4 2 L1.5 4 L4 6" stroke="#1a4a3a" stroke-width="1.6" fill="none"/><path d="M2 10 H8" stroke="#b02a10" stroke-width="1.8"/><circle cx="12" cy="2" r="1.2" fill="#111"/><circle cx="12" cy="7" r="1.2" fill="#111"/><circle cx="12" cy="12.5" r="1.2" fill="#111"/></svg>
<svg class="a" style="left:323px;top:256px" width="8" height="5" viewBox="0 0 8 5"><path d="M0 0 H8 L4 4.5 Z" fill="#111"/></svg>
<svg class="a" style="left:337px;top:248px" width="18" height="18" viewBox="0 0 18 18"><path d="M3 2 H11 L16 7 V17 H3 Z" fill="#eee" stroke="#999"/><path d="M1 7 L6 4 L10 9 L6 13 Z" fill="#ddd" stroke="#777" stroke-width="0.8"/><path d="M6 8 L13 15" stroke="#666" stroke-dasharray="1 1"/></svg>
<div class="a" style="left:245px;top:271px;width:60px;height:60px;border:1px solid #7a7a7a;background:#fff"></div>
<svg class="a" style="left:244px;top:270px" width="62" height="62" viewBox="0 0 748 748"><rect x="40" y="155" width="680" height="445" fill="#dcdcdc"/>
<path d="M65 215 L270 300 L275 540 L330 592 L80 505 Z" fill="#c4c4c4"/>
<path d="M270 295 L690 255 L692 455 L330 592 L275 540 Z" fill="#e9e9e9"/>
<path d="M45 185 L510 165 L700 255 L270 298 Z" fill="#e8883e"/>
<path d="M55 195 L265 300 M265 300 L700 258" stroke="#8a4a20" stroke-width="10" stroke-dasharray="22 14" fill="none"/>
<path d="M290 305 L370 298 L370 385 L290 392 Z" fill="#6a6a6a"/>
<path d="M455 290 H470 V345 H455 Z M540 282 H560 V335 H540 Z M620 272 H665 V335 H620 Z" fill="#555"/>
<path d="M250 405 L460 385 L470 405 L260 425 Z" fill="#e8a050"/>
<path d="M350 425 H400 V515 H350 Z M410 418 H440 V505 H410 Z M450 408 H480 V490 H450 Z M510 400 H550 V475 H510 Z M585 382 H660 V460 H585 Z" fill="#5a4a3a"/>
<path d="M90 290 H105 V345 H90 Z M95 410 H115 V440 H95 Z M140 410 H160 V445 H140 Z" fill="#777"/>
<circle cx="320" cy="125" r="80" fill="#fff" stroke="#111" stroke-width="16"/>
<path d="M370 90 A55 55 0 1 0 370 160" stroke="#111" stroke-width="16" fill="none"/></svg>
<div class="a" style="left:310px;top:271px;width:100px;height:60px;border:1px solid #7a7a7a;background:#fff"></div>
<div class="a" style="left:349px;top:303px;width:22px;height:3px;background:#707070"></div>
<div class="a" style="left:358.5px;top:293px;width:3.0px;height:23px;background:#707070"></div>
<div class="a" style="left:243px;top:333px;width:767px;height:26px;background:#ababab"></div>
<div class="a" style="left:243px;top:359px;width:767px;height:368px;background:#fff"></div>
<div class="a" style="left:1007px;top:359px;width:1px;height:368px;background:#e6e6e6"></div>
<div class="a" style="left:243px;top:339px;width:45px;height:21px;background:#fff"></div>
<div class="t" style="left:250.5px;top:343.86px;font-size:10.8px;color:#111;">Maße</div>
<div class="a" style="left:288px;top:341px;width:185px;height:18px;background:#f0f0f0;border:1px solid #d9d9d9;border-bottom:none"></div>
<div class="t" style="left:292.5px;top:344.86px;font-size:10.8px;color:#111;">Bauzustand/allg.Gebäudeparameter</div>
<div class="a" style="left:473px;top:341px;width:60px;height:18px;background:#f0f0f0;border:1px solid #d9d9d9;border-bottom:none"></div>
<div class="t" style="left:478.5px;top:344.86px;font-size:10.8px;color:#111;">Verbrauch</div>
<div class="a" style="left:533px;top:341px;width:183px;height:18px;background:#f0f0f0;border:1px solid #d9d9d9;border-bottom:none"></div>
<div class="t" style="left:540px;top:344.86px;font-size:10.8px;color:#111;">Vereinfachungen/bes.Einstellungen</div>
<div class="a" style="left:716px;top:341px;width:108px;height:18px;background:#f0f0f0;border:1px solid #d9d9d9;border-bottom:none"></div>
<div class="t" style="left:723px;top:344.86px;font-size:10.8px;color:#111;">Fördergeldberatung</div>
<div class="t" style="right:822px;text-align:right;top:385.94px;font-size:10.7px;color:#111;">beheizte Fläche</div>
<div class="a" style="left:381px;top:380px;width:76px;height:21px;background:#fff;border:1px solid #7a7a7a;border-right-color:#3c3c3c;border-bottom-color:#3c3c3c"></div>
<div class="t" style="right:765px;text-align:right;top:385.69px;font-size:11px;color:#777;">190,2</div>
<svg class="a" style="left:438px;top:382px" width="17" height="16" viewBox="0 0 17 16"><defs><linearGradient id="ga" x1="0" y1="0" x2="0" y2="1"><stop offset="0" stop-color="#a6d828"/><stop offset="1" stop-color="#94c860"/></linearGradient></defs><rect x="0.5" y="0.5" width="16" height="15" fill="url(#ga)" stroke="#86b050" stroke-width="1"/><path d="M3 14 L7.1 2.2 H9.9 L14 14 H11.3 L10.5 11.4 H6.5 L5.7 14 Z M7.1 9.3 H9.9 L8.5 4.8 Z" fill="#f8ffd8"/></svg>
<div class="t" style="left:460px;top:385.69px;font-size:11px;color:#111;">m²</div>
<div class="t" style="right:822px;text-align:right;top:409.94px;font-size:10.7px;color:#111;">Wohneinheiten</div>
<div class="a" style="left:381px;top:404px;width:76px;height:21px;background:#fff;border:1px solid #7a7a7a;border-right-color:#3c3c3c;border-bottom-color:#3c3c3c"></div>
<div class="t" style="right:765px;text-align:right;top:409.69px;font-size:11px;color:#777;">1</div>
<svg class="a" style="left:438px;top:406px" width="17" height="16" viewBox="0 0 17 16"><defs><linearGradient id="ga" x1="0" y1="0" x2="0" y2="1"><stop offset="0" stop-color="#a6d828"/><stop offset="1" stop-color="#94c860"/></linearGradient></defs><rect x="0.5" y="0.5" width="16" height="15" fill="url(#ga)" stroke="#86b050" stroke-width="1"/><path d="M3 14 L7.1 2.2 H9.9 L14 14 H11.3 L10.5 11.4 H6.5 L5.7 14 Z M7.1 9.3 H9.9 L8.5 4.8 Z" fill="#f8ffd8"/></svg>
<div class="t" style="right:822px;text-align:right;top:433.94px;font-size:10.7px;color:#111;">Geschosse</div>
<div class="a" style="left:381px;top:428px;width:76px;height:21px;background:#fff;border:1px solid #7a7a7a;border-right-color:#3c3c3c;border-bottom-color:#3c3c3c"></div>
<div class="t" style="right:765px;text-align:right;top:433.69px;font-size:11px;color:#777;">2</div>
<svg class="a" style="left:438px;top:430px" width="17" height="16" viewBox="0 0 17 16"><defs><linearGradient id="ga" x1="0" y1="0" x2="0" y2="1"><stop offset="0" stop-color="#a6d828"/><stop offset="1" stop-color="#94c860"/></linearGradient></defs><rect x="0.5" y="0.5" width="16" height="15" fill="url(#ga)" stroke="#86b050" stroke-width="1"/><path d="M3 14 L7.1 2.2 H9.9 L14 14 H11.3 L10.5 11.4 H6.5 L5.7 14 Z M7.1 9.3 H9.9 L8.5 4.8 Z" fill="#f8ffd8"/></svg>
<div class="t" style="right:822px;text-align:right;top:457.94px;font-size:10.7px;color:#111;">Baujahr</div>
<div class="a" style="left:381px;top:452px;width:76px;height:21px;background:#fff;border:1px solid #7a7a7a;border-right-color:#3c3c3c;border-bottom-color:#3c3c3c"></div>
<div class="t" style="right:748px;text-align:right;top:457.69px;font-size:11px;color:#111;">2022</div>
<div class="t" style="right:822px;text-align:right;top:481.94px;font-size:10.7px;color:#111;">charakteristische Länge</div>
<div class="a" style="left:381px;top:476px;width:76px;height:21px;background:#fff;border:1px solid #7a7a7a;border-right-color:#3c3c3c;border-bottom-color:#3c3c3c"></div>
<div class="t" style="right:765px;text-align:right;top:481.69px;font-size:11px;color:#111;">15,26</div>
<svg class="a" style="left:438px;top:479px" width="15" height="15" viewBox="0 0 15 15"><rect x="0.5" y="0.5" width="14" height="14" fill="#1a48a8" stroke="#0a1a5a" stroke-width="1"/><path d="M3.2 10 L9.8 3.4 L12.2 5.8 L5.6 12.4 Z" fill="#fff"/><path d="M10.6 2.6 L11.8 1.4 Q12.3 1 12.8 1.4 L13.8 2.4 Q14.2 2.9 13.8 3.4 L12.6 4.6 Z" fill="#fff"/><path d="M2.5 10.9 L4.8 13.2 L1.6 13.9 Z" fill="#fff"/></svg>
<div class="t" style="left:460px;top:481.69px;font-size:11px;color:#111;">m</div>
<div class="t" style="right:638px;text-align:right;top:385.94px;font-size:10.7px;color:#111;">Raumhöhe</div>
<div class="a" style="left:565px;top:380px;width:76px;height:21px;background:#fff;border:1px solid #7a7a7a;border-right-color:#3c3c3c;border-bottom-color:#3c3c3c"></div>
<div class="t" style="right:581px;text-align:right;top:385.69px;font-size:11px;color:#777;">3,07</div>
<svg class="a" style="left:622px;top:382px" width="17" height="16" viewBox="0 0 17 16"><defs><linearGradient id="ga" x1="0" y1="0" x2="0" y2="1"><stop offset="0" stop-color="#a6d828"/><stop offset="1" stop-color="#94c860"/></linearGradient></defs><rect x="0.5" y="0.5" width="16" height="15" fill="url(#ga)" stroke="#86b050" stroke-width="1"/><path d="M3 14 L7.1 2.2 H9.9 L14 14 H11.3 L10.5 11.4 H6.5 L5.7 14 Z M7.1 9.3 H9.9 L8.5 4.8 Z" fill="#f8ffd8"/></svg>
<div class="t" style="left:644px;top:385.69px;font-size:11px;color:#111;">m</div>
<div class="t" style="right:638px;text-align:right;top:433.94px;font-size:10.7px;color:#111;">Vollgeschosse</div>
<div class="a" style="left:565px;top:428px;width:76px;height:21px;background:#fff;border:1px solid #7a7a7a;border-right-color:#3c3c3c;border-bottom-color:#3c3c3c"></div>
<div class="t" style="right:581px;text-align:right;top:433.69px;font-size:11px;color:#777;">2</div>
<svg class="a" style="left:622px;top:430px" width="17" height="16" viewBox="0 0 17 16"><defs><linearGradient id="ga" x1="0" y1="0" x2="0" y2="1"><stop offset="0" stop-color="#a6d828"/><stop offset="1" stop-color="#94c860"/></linearGradient></defs><rect x="0.5" y="0.5" width="16" height="15" fill="url(#ga)" stroke="#86b050" stroke-width="1"/><path d="M3 14 L7.1 2.2 H9.9 L14 14 H11.3 L10.5 11.4 H6.5 L5.7 14 Z M7.1 9.3 H9.9 L8.5 4.8 Z" fill="#f8ffd8"/></svg>
<div class="t" style="right:638px;text-align:right;top:481.94px;font-size:10.7px;color:#111;">Breite</div>
<div class="a" style="left:565px;top:476px;width:76px;height:21px;background:#fff;border:1px solid #7a7a7a;border-right-color:#3c3c3c;border-bottom-color:#3c3c3c"></div>
<div class="t" style="right:581px;text-align:right;top:481.69px;font-size:11px;color:#111;">7,57</div>
<svg class="a" style="left:622px;top:479px" width="15" height="15" viewBox="0 0 15 15"><rect x="0.5" y="0.5" width="14" height="14" fill="#1a48a8" stroke="#0a1a5a" stroke-width="1"/><path d="M3.2 10 L9.8 3.4 L12.2 5.8 L5.6 12.4 Z" fill="#fff"/><path d="M10.6 2.6 L11.8 1.4 Q12.3 1 12.8 1.4 L13.8 2.4 Q14.2 2.9 13.8 3.4 L12.6 4.6 Z" fill="#fff"/><path d="M2.5 10.9 L4.8 13.2 L1.6 13.9 Z" fill="#fff"/></svg>
<div class="t" style="left:644px;top:481.69px;font-size:11px;color:#111;">m</div>
<div class="t" style="right:407px;text-align:right;top:386.20px;font-size:10.4px;color:#111;">äußeres Gebäudevolumen</div>
<div class="a" style="left:797px;top:380px;width:76px;height:21px;background:#fff;border:1px solid #7a7a7a;border-right-color:#3c3c3c;border-bottom-color:#3c3c3c"></div>
<div class="t" style="right:349px;text-align:right;top:385.69px;font-size:11px;color:#111;">792,0</div>
<svg class="a" style="left:854px;top:383px" width="15" height="15" viewBox="0 0 15 15"><rect x="0.5" y="0.5" width="14" height="14" fill="#1a48a8" stroke="#0a1a5a" stroke-width="1"/><path d="M3.2 10 L9.8 3.4 L12.2 5.8 L5.6 12.4 Z" fill="#fff"/><path d="M10.6 2.6 L11.8 1.4 Q12.3 1 12.8 1.4 L13.8 2.4 Q14.2 2.9 13.8 3.4 L12.6 4.6 Z" fill="#fff"/><path d="M2.5 10.9 L4.8 13.2 L1.6 13.9 Z" fill="#fff"/></svg>
<div class="t" style="left:876px;top:385.69px;font-size:11px;color:#111;">m³</div>
<div class="t" style="right:407px;text-align:right;top:410.03px;font-size:10.6px;color:#111;">Gebäudenutzfläche AN</div>
<div class="a" style="left:797px;top:404px;width:76px;height:21px;background:#ececec;border:1px solid #7a7a7a;border-right-color:#3c3c3c;border-bottom-color:#3c3c3c"></div>
<div class="t" style="right:332px;text-align:right;top:409.69px;font-size:11px;font-weight:700;color:#111;">199,3</div>
<div class="t" style="left:876px;top:409.69px;font-size:11px;color:#111;">m²</div>
<div class="t" style="right:407px;text-align:right;top:434.03px;font-size:10.6px;color:#111;">Netto-Raumfläche NRF</div>
<div class="a" style="left:797px;top:428px;width:76px;height:21px;background:#fff;border:1px solid #9a9a9a;border-right-color:#5a5a5a;border-bottom-color:#5a5a5a"></div>
<div class="t" style="right:349px;text-align:right;top:433.69px;font-size:11px;color:#777;">190,2</div>
<svg class="a" style="left:854px;top:430px" width="17" height="16" viewBox="0 0 17 16"><defs><linearGradient id="ga" x1="0" y1="0" x2="0" y2="1"><stop offset="0" stop-color="#a6d828"/><stop offset="1" stop-color="#94c860"/></linearGradient></defs><rect x="0.5" y="0.5" width="16" height="15" fill="url(#ga)" stroke="#86b050" stroke-width="1"/><path d="M3 14 L7.1 2.2 H9.9 L14 14 H11.3 L10.5 11.4 H6.5 L5.7 14 Z M7.1 9.3 H9.9 L8.5 4.8 Z" fill="#f8ffd8"/></svg>
<div class="t" style="left:876px;top:433.69px;font-size:11px;color:#111;">m²</div>
<div class="t" style="right:407px;text-align:right;top:461.03px;font-size:10.6px;color:#111;">Brutto-Grundfläche BGF</div>
<div class="a" style="left:797px;top:455px;width:76px;height:21px;background:#fff;border:1px solid #9a9a9a;border-right-color:#5a5a5a;border-bottom-color:#5a5a5a"></div>
<div class="t" style="right:349px;text-align:right;top:460.69px;font-size:11px;color:#777;">231,1</div>
<svg class="a" style="left:854px;top:457px" width="17" height="16" viewBox="0 0 17 16"><defs><linearGradient id="ga" x1="0" y1="0" x2="0" y2="1"><stop offset="0" stop-color="#a6d828"/><stop offset="1" stop-color="#94c860"/></linearGradient></defs><rect x="0.5" y="0.5" width="16" height="15" fill="url(#ga)" stroke="#86b050" stroke-width="1"/><path d="M3 14 L7.1 2.2 H9.9 L14 14 H11.3 L10.5 11.4 H6.5 L5.7 14 Z M7.1 9.3 H9.9 L8.5 4.8 Z" fill="#f8ffd8"/></svg>
<div class="t" style="left:876px;top:460.69px;font-size:11px;color:#111;">m²</div>
<div class="t" style="right:407px;text-align:right;top:488.03px;font-size:10.6px;color:#111;">Brutto-Rauminhalt BRI</div>
<div class="a" style="left:797px;top:482px;width:76px;height:21px;background:#fff;border:1px solid #9a9a9a;border-right-color:#5a5a5a;border-bottom-color:#5a5a5a"></div>
<div class="t" style="right:349px;text-align:right;top:487.69px;font-size:11px;color:#777;">799,6</div>
<svg class="a" style="left:854px;top:484px" width="17" height="16" viewBox="0 0 17 16"><defs><linearGradient id="ga" x1="0" y1="0" x2="0" y2="1"><stop offset="0" stop-color="#a6d828"/><stop offset="1" stop-color="#94c860"/></linearGradient></defs><rect x="0.5" y="0.5" width="16" height="15" fill="url(#ga)" stroke="#86b050" stroke-width="1"/><path d="M3 14 L7.1 2.2 H9.9 L14 14 H11.3 L10.5 11.4 H6.5 L5.7 14 Z M7.1 9.3 H9.9 L8.5 4.8 Z" fill="#f8ffd8"/></svg>
<div class="t" style="left:876px;top:487.69px;font-size:11px;color:#111;">m³</div>
<div class="a" style="left:668px;top:426px;width:227px;height:91px;border:2px solid #8b1a1a"></div>
<div class="a" style="left:749px;top:509px;width:1px;height:24px;background:#6a1010"></div>
<div class="t" style="left:664px;top:535.01px;font-size:11.8px;font-weight:700;color:#8e1616;">zusätzliche Angaben für die Ökobilanzierung</div>
<div class="a" style="left:1010px;top:77px;width:17px;height:650px;background:#f0f0f0"></div>
<div class="a" style="left:1011px;top:93px;width:15px;height:552px;background:#cdcdcd"></div>
<svg class="a" style="left:1014px;top:82px" width="9" height="6" viewBox="0 0 9 6"><path d="M0.8 5 L4.5 1.2 L8.2 5" stroke="#333" stroke-width="1.6" fill="none"/></svg>
<svg class="a" style="left:1014px;top:716px" width="9" height="6" viewBox="0 0 9 6"><path d="M0.8 1 L4.5 4.8 L8.2 1" stroke="#333" stroke-width="1.6" fill="none"/></svg>
<div class="a" style="left:240px;top:727px;width:770px;height:18px;background:#f0f0f0"></div>
<div class="a" style="left:257px;top:728px;width:733px;height:15px;background:#cdcdcd"></div>
<svg class="a" style="left:245px;top:732px" width="7" height="8" viewBox="0 0 7 8"><path d="M5.5 0.8 L1.5 4 L5.5 7.2" stroke="#222" stroke-width="1.7" fill="none"/></svg>
<svg class="a" style="left:998px;top:732px" width="7" height="8" viewBox="0 0 7 8"><path d="M1.5 0.8 L5.5 4 L1.5 7.2" stroke="#222" stroke-width="1.7" fill="none"/></svg>
<div class="a" style="left:1027px;top:77px;width:1px;height:645px;background:#5a5a5a"></div>
<div class="a" style="left:1028px;top:77px;width:169px;height:645px;background:#f0f0f0"></div>
<div class="a" style="left:1197px;top:77px;width:1px;height:671px;background:#a0a0a0"></div>
<div class="a" style="left:1029px;top:78px;width:143px;height:20px;background:#e5e5e5;border:1px solid #c8c8c8"></div>
<div class="t" style="left:1031.5px;top:82.68px;font-size:11.6px;">Ist-Zustand</div>
<svg class="a" style="left:1158px;top:85px" width="10" height="6" viewBox="0 0 10 6"><path d="M0.8 0.8 L5 5 L9.2 0.8" stroke="#444" stroke-width="1.3" fill="none"/></svg>
<div class="a" style="left:1173px;top:77px;width:21px;height:22px;background:#d4f4f6;border:1px solid #1a3a4a"></div>
<svg class="a" style="left:1175px;top:79px" width="17" height="18" viewBox="0 0 17 18"><rect x="0.5" y="0.5" width="16" height="17" fill="#a0cc3a"/><path d="M2.5 16 L6.8 3 H10.2 L14.5 16 H11.5 L10.6 13 H6.4 L5.5 16 Z M7.1 10.6 H9.9 L8.5 5.8 Z" fill="#f6fae0"/></svg>
<div class="t" style="left:1033px;top:126.70px;font-size:21.5px;color:#111;-webkit-text-stroke:0;transform:scaleX(0.89);transform-origin:left top">GEG 2020</div>
<svg class="a" style="left:1146px;top:129px" width="22" height="22" viewBox="0 0 22 22"><circle cx="11" cy="11" r="10" fill="#9cc21a" stroke="#4a6a10" stroke-width="1"/></svg>
<svg class="a" style="left:1170.5px;top:129px" width="22" height="22" viewBox="0 0 22 22"><circle cx="11" cy="11" r="10" fill="#fafafa" stroke="#5a5a5a" stroke-width="1"/></svg>
<div class="t" style="left:1034px;top:150.67px;font-size:12.2px;color:#111;">DIN V 18599</div>
<div class="a" style="left:1033px;top:183px;width:20px;height:128px;background:#c8c8c8"></div>
<div class="t" style="left:983.0px;top:247.0px;width:120px;text-align:center;font-size:10px;color:#111;transform:rotate(-90deg)">Effizienzklasse</div>
<div class="a" style="left:1056px;top:183px;width:136px;height:128px;background:#9cc414"></div>
<svg class="a" style="left:1054px;top:180px" width="140" height="131" viewBox="0 0 140 131"><path fill-rule="evenodd" d="M16 103 L42.2 18.7 L69.1 18.7 L97 103 L75 103 L69.6 85.6 L42.6 85.6 L37.2 103 Z M41.4 73.4 L55.6 33.5 L69 73.4 Z" fill="#fff" stroke="#fff" stroke-width="2" stroke-linejoin="round"/><rect x="92.8" y="32.7" width="39.7" height="10.6" rx="2" fill="#fff"/><rect x="107.8" y="17.7" width="9.7" height="40.6" rx="2" fill="#fff"/></svg>
<div class="t" style="left:1125.5px;top:293.87px;font-size:13.5px;font-weight:700;color:#fff;">18</div>
<div class="t" style="left:1144.5px;top:294.30px;font-size:13px;color:#fff;">kWh/m²</div>
<div class="a" style="left:1033px;top:319px;width:20px;height:30px;background:#c8c8c8"></div>
<div class="t" style="left:983.0px;top:329.0px;width:120px;text-align:center;font-size:10px;color:#111;transform:rotate(-90deg)">Qp</div>
<div class="a" style="left:1056px;top:319px;width:61px;height:13px;background:#c8c8c8"></div>
<div class="t" style="left:1060px;top:320.19px;font-size:11px;color:#111;">77,7</div>
<div class="t" style="left:1061px;top:336.69px;font-size:11px;color:#111;">9,8</div>
<div class="a" style="left:1033px;top:356px;width:20px;height:20px;background:#c8c8c8"></div>
<div class="t" style="left:983.0px;top:361.0px;width:120px;text-align:center;font-size:10px;color:#111;transform:rotate(-90deg)">EH</div>
<div class="a" style="left:1056px;top:356px;width:31px;height:20px;background:#a8d048;border:1px solid #6a9a20"></div>
<div class="t" style="left:1058px;top:361.54px;font-size:10px;color:#fff;">40 NH</div>
<div class="a" style="left:1033px;top:385px;width:20px;height:45px;background:#c8c8c8"></div>
<div class="t" style="left:983.0px;top:402.5px;width:120px;text-align:center;font-size:10px;color:#111;transform:rotate(-90deg)">H'<sub style='font-size:7px'>T</sub></div>
<div class="a" style="left:1056px;top:385px;width:20px;height:13px;background:linear-gradient(90deg,#4f8a12,#6aa81c)"></div>
<div class="t" style="left:1060px;top:386.19px;font-size:11px;color:#111;">0,22</div>
<div class="a" style="left:1056px;top:400px;width:20px;height:14px;background:#c8c8c8"></div>
<div class="t" style="left:1060px;top:401.69px;font-size:11px;color:#111;">0,40</div>
<div class="a" style="left:1056px;top:416px;width:20px;height:14px;background:#c8c8c8"></div>
<div class="t" style="left:1060px;top:417.69px;font-size:11px;color:#111;">0,40</div>
<div class="t" style="left:1033.5px;top:436.53px;font-size:23px;color:#111;-webkit-text-stroke:0;transform:scaleX(0.73);transform-origin:left top">EE</div>
<svg class="a" style="left:1146px;top:440px" width="22" height="22" viewBox="0 0 22 22"><circle cx="11" cy="11" r="10" fill="#9cc21a" stroke="#4a6a10" stroke-width="1"/></svg>
<svg class="a" style="left:1170.5px;top:440px" width="22" height="22" viewBox="0 0 22 22"><circle cx="11" cy="11" r="10" fill="#fafafa" stroke="#5a5a5a" stroke-width="1"/></svg>
<div class="a" style="left:1033px;top:472px;width:20px;height:29px;background:#c8c8c8"></div>
<div class="a" style="left:1056px;top:472px;width:89px;height:13px;background:#c8c8c8"></div>
<div class="t" style="left:1060px;top:473.19px;font-size:11px;color:#111;">100%</div>
<div class="a" style="left:1056px;top:487px;width:136px;height:14px;background:linear-gradient(90deg,#b01010 0%,#e07a20 30%,#f8d838 55%,#a8b820 78%,#3f8a10 100%)"></div>
<div class="t" style="left:1060px;top:488.69px;font-size:11px;color:#2a1010;">604%</div>
<div class="t" style="left:1032.5px;top:510.10px;font-size:21.5px;color:#111;-webkit-text-stroke:0;transform:scaleX(0.96);transform-origin:left top">Sommer</div>
<svg class="a" style="left:1146px;top:511px" width="22" height="22" viewBox="0 0 22 22"><circle cx="11" cy="11" r="10" fill="#9cc21a" stroke="#4a6a10" stroke-width="1"/></svg>
<svg class="a" style="left:1170.5px;top:511px" width="22" height="22" viewBox="0 0 22 22"><circle cx="11" cy="11" r="10" fill="#fafafa" stroke="#5a5a5a" stroke-width="1"/></svg>
<div class="a" style="left:1028px;top:544px;width:170px;height:1px;background:#a0a0a0"></div>
<div class="t" style="left:1033px;top:552.70px;font-size:21.5px;color:#111;-webkit-text-stroke:0;transform:scaleX(0.975);transform-origin:left top">Luft</div>
<svg class="a" style="left:1121px;top:552.5px" width="22" height="22" viewBox="0 0 22 22"><circle cx="11" cy="11" r="10" fill="#9cc21a" stroke="#4a6a10" stroke-width="1"/></svg>
<svg class="a" style="left:1145.5px;top:552.5px" width="22" height="22" viewBox="0 0 22 22"><circle cx="11" cy="11" r="10" fill="#fafafa" stroke="#5a5a5a" stroke-width="1"/></svg>
<svg class="a" style="left:1170px;top:552.5px" width="22" height="22" viewBox="0 0 22 22"><circle cx="11" cy="11" r="10" fill="#fafafa" stroke="#5a5a5a" stroke-width="1"/></svg>
<div class="a" style="left:1033px;top:580px;width:20px;height:30px;background:#c8c8c8"></div>
<div class="t" style="left:983.0px;top:590.0px;width:120px;text-align:center;font-size:10px;color:#111;transform:rotate(-90deg)">Inf min</div>
<div class="a" style="left:1056px;top:580px;width:62px;height:14px;background:#c8c8c8"></div>
<div class="t" style="left:1060px;top:582.19px;font-size:11px;color:#111;">31,5</div>
<div class="a" style="left:1056px;top:595px;width:56px;height:15px;background:linear-gradient(90deg,#4f8a12,#e8d838);border-right:1px solid #e0c020"></div>
<div class="t" style="left:1060px;top:597.69px;font-size:11px;color:#111;">28,5</div>
<div class="a" style="left:1028px;top:616px;width:170px;height:1px;background:#a0a0a0"></div>
<div class="t" style="left:1033px;top:624.10px;font-size:21.5px;color:#111;-webkit-text-stroke:0;transform:scaleX(0.966);transform-origin:left top">Beratung</div>
<svg class="a" style="left:1145.5px;top:624px" width="22" height="22" viewBox="0 0 22 22"><circle cx="11" cy="11" r="10" fill="#fafafa" stroke="#5a5a5a" stroke-width="1"/></svg>
<svg class="a" style="left:1170px;top:624px" width="22" height="22" viewBox="0 0 22 22"><circle cx="11" cy="11" r="10" fill="#fafafa" stroke="#5a5a5a" stroke-width="1"/></svg>
<div class="t" style="left:1034px;top:649.67px;font-size:12.2px;color:#111;">DIN V 18599</div>
<div class="a" style="left:1033px;top:671px;width:20px;height:30px;background:#c8c8c8"></div>
<div class="t" style="left:983.0px;top:681.0px;width:120px;text-align:center;font-size:10px;color:#111;transform:rotate(-90deg)">EKZ</div>
<div class="a" style="left:1056px;top:671px;width:109px;height:14px;background:linear-gradient(90deg,#4a8a12 0%,#a8b418 38%,#f8d838 63%,#e8a030 80%,#d86a20 100%)"></div>
<div class="t" style="left:1060px;top:672.69px;font-size:11px;color:#111;">4,1</div>
<div class="a" style="left:1033px;top:706px;width:20px;height:24px;background:#c8c8c8"></div>
<div class="t" style="left:983.0px;top:713.0px;width:120px;text-align:center;font-size:10px;color:#111;transform:rotate(-90deg)">CO<sub style="font-size:7px">2</sub></div>
<div class="a" style="left:1056px;top:706px;width:109px;height:14px;background:linear-gradient(90deg,#4a8a12 0%,#a8b418 38%,#f8d838 63%,#e8a030 80%,#d86a20 100%)"></div>
<div class="t" style="left:1060px;top:707.69px;font-size:11px;color:#111;">435</div>
<div class="a" style="left:1010px;top:722px;width:187px;height:23px;background:#f0f0f0"></div>
<div class="a" style="left:0px;top:746px;width:1200px;height:2px;background:#555"></div>
</body></html>
